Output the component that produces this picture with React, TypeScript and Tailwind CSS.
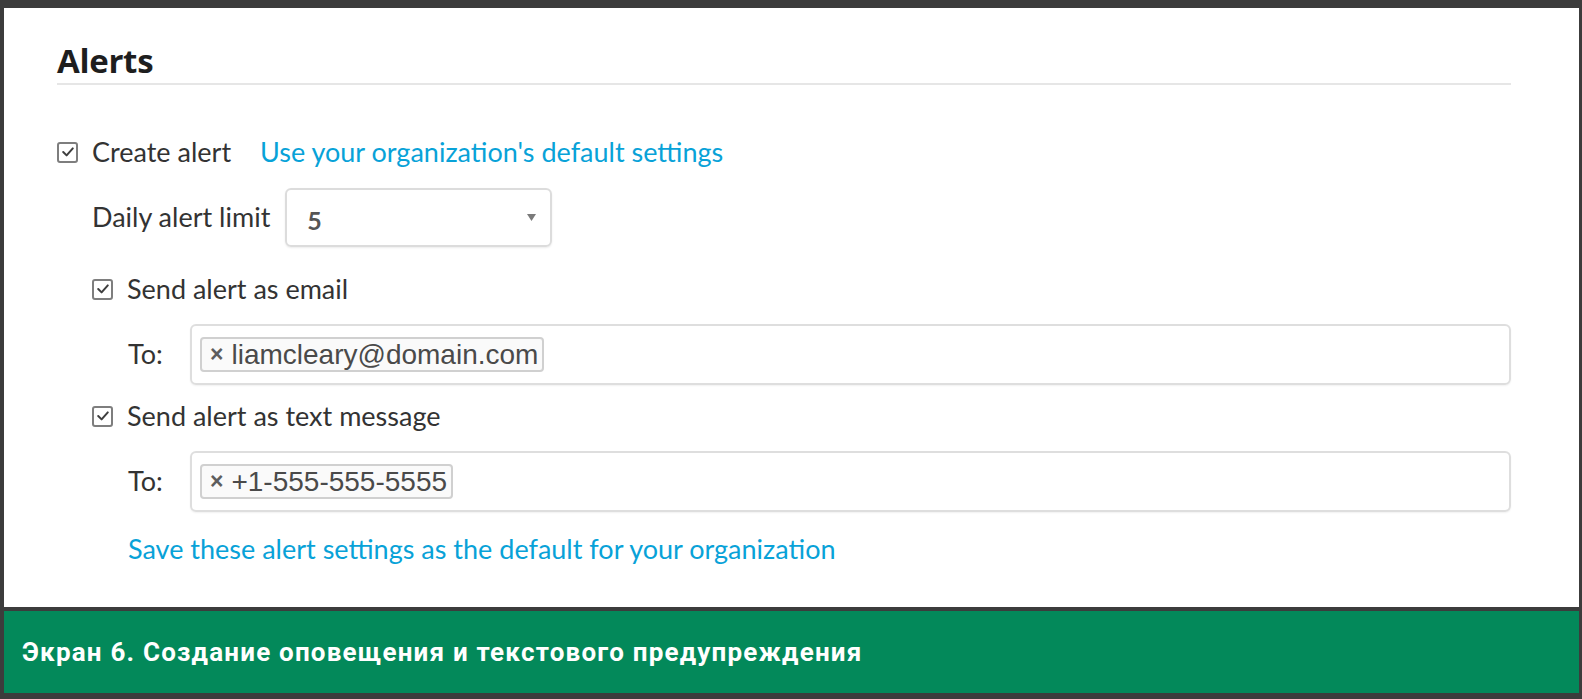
import React from "react";

const ui = { fontFamily: 'Lato, "Open Sans", sans-serif' };
const heading = { fontFamily: '"Open Sans", "Noto Sans", sans-serif' };
const arial = { fontFamily: '"Liberation Sans", Arial, sans-serif' };
const caption = { fontFamily: 'Roboto, "Liberation Sans", sans-serif' };

function Checkbox() {
  return (
    <span className="flex h-[21px] w-[21px] shrink-0 items-center justify-center rounded-[3px] border-2 border-[#7e7e7e] bg-white">
      <svg width="14" height="14" viewBox="0 0 14 14" fill="none">
        <path d="M2.2 7 L5.6 10.4 L11.8 3.4" stroke="#3e3e3e" strokeWidth="2" strokeLinecap="round" strokeLinejoin="round" />
      </svg>
    </span>
  );
}

function Chip({ value }: { value: string }) {
  return (
    <span
      style={arial}
      className="flex h-[35px] items-center gap-[8px] rounded-[4px] border-2 border-[#d0d0d0] bg-[#fafafa] pl-[8px] pr-[4px] text-[28px] text-[#4a4a4a]"
    >
      <span className="text-[23px] font-bold text-[#5e5e5e]">×</span>
      {value}
    </span>
  );
}

function ToField({ value }: { value: string }) {
  return (
    <div className="flex items-center pl-[71px]">
      <span className="w-[62px] text-[27px] text-[#333]">To:</span>
      <div className="flex h-[61px] flex-1 items-center rounded-[6px] border-2 border-[#dedede] pl-[8px] shadow-[0_1px_2px_rgba(0,0,0,0.06)]">
        <Chip value={value} />
      </div>
    </div>
  );
}

export default function App() {
  return (
    <div className="flex h-[699px] w-[1582px] flex-col bg-[#3c3c3c] pl-[4px] pr-[3px] pt-[8px]" style={ui}>
      {/* Alerts panel */}
      <div className="h-[599px] bg-white pl-[53px] pr-[68px] pt-[32px]">
        <h2
          style={heading}
          className="border-b-2 border-[#e6e6e6] pb-[1px] text-[33px] font-bold leading-[42px] tracking-[-0.3px] text-[#1e1e1e]"
        >
          Alerts
        </h2>

        <div className="mt-[52px] flex h-[30px] items-center">
          <Checkbox />
          <span className="ml-[14px] text-[27px] text-[#333]">Create alert</span>
          <a className="ml-[29px] text-[27px] text-[#08a2d8]">
            Use your organization's default settings
          </a>
        </div>

        <div className="mt-[21px] flex items-center pl-[35px]">
          <span className="text-[27px] text-[#333]">Daily alert limit</span>
          <div className="ml-[15px] flex h-[59px] w-[267px] items-center justify-between rounded-[6px] border-2 border-[#dcdcdc] pl-[20px] pr-[14px] shadow-[0_1px_2px_rgba(0,0,0,0.08)]">
            <span className="mt-[6px] text-[25px] font-bold text-[#555]">5</span>
            <svg width="9" height="7" viewBox="0 0 9 7">
              <path d="M0 0 H9 L4.5 7 Z" fill="#7a7a7a" />
            </svg>
          </div>
        </div>

        <div className="mt-[27px] flex h-[30px] items-center pl-[35px]">
          <Checkbox />
          <span className="ml-[14px] text-[27px] text-[#333]">Send alert as email</span>
        </div>

        <div className="mt-[20px]">
          <ToField value="liamcleary@domain.com" />
        </div>

        <div className="mt-[16px] flex h-[30px] items-center pl-[35px]">
          <Checkbox />
          <span className="ml-[14px] text-[27px] text-[#333]">Send alert as text message</span>
        </div>

        <div className="mt-[20px]">
          <ToField value="+1-555-555-5555" />
        </div>

        <div className="mt-[22px] flex h-[30px] items-center pl-[71px]">
          <a className="text-[27px] text-[#08a2d8]">
            Save these alert settings as the default for your organization
          </a>
        </div>
      </div>

      {/* Caption */}
      <div className="mt-[4px] flex h-[82px] items-center bg-[#03895a] pl-[18px]">
        <span style={caption} className="text-[26px] font-bold tracking-[1.2px] text-white">
          Экран 6. Создание оповещения и текстового предупреждения
        </span>
      </div>
    </div>
  );
}
